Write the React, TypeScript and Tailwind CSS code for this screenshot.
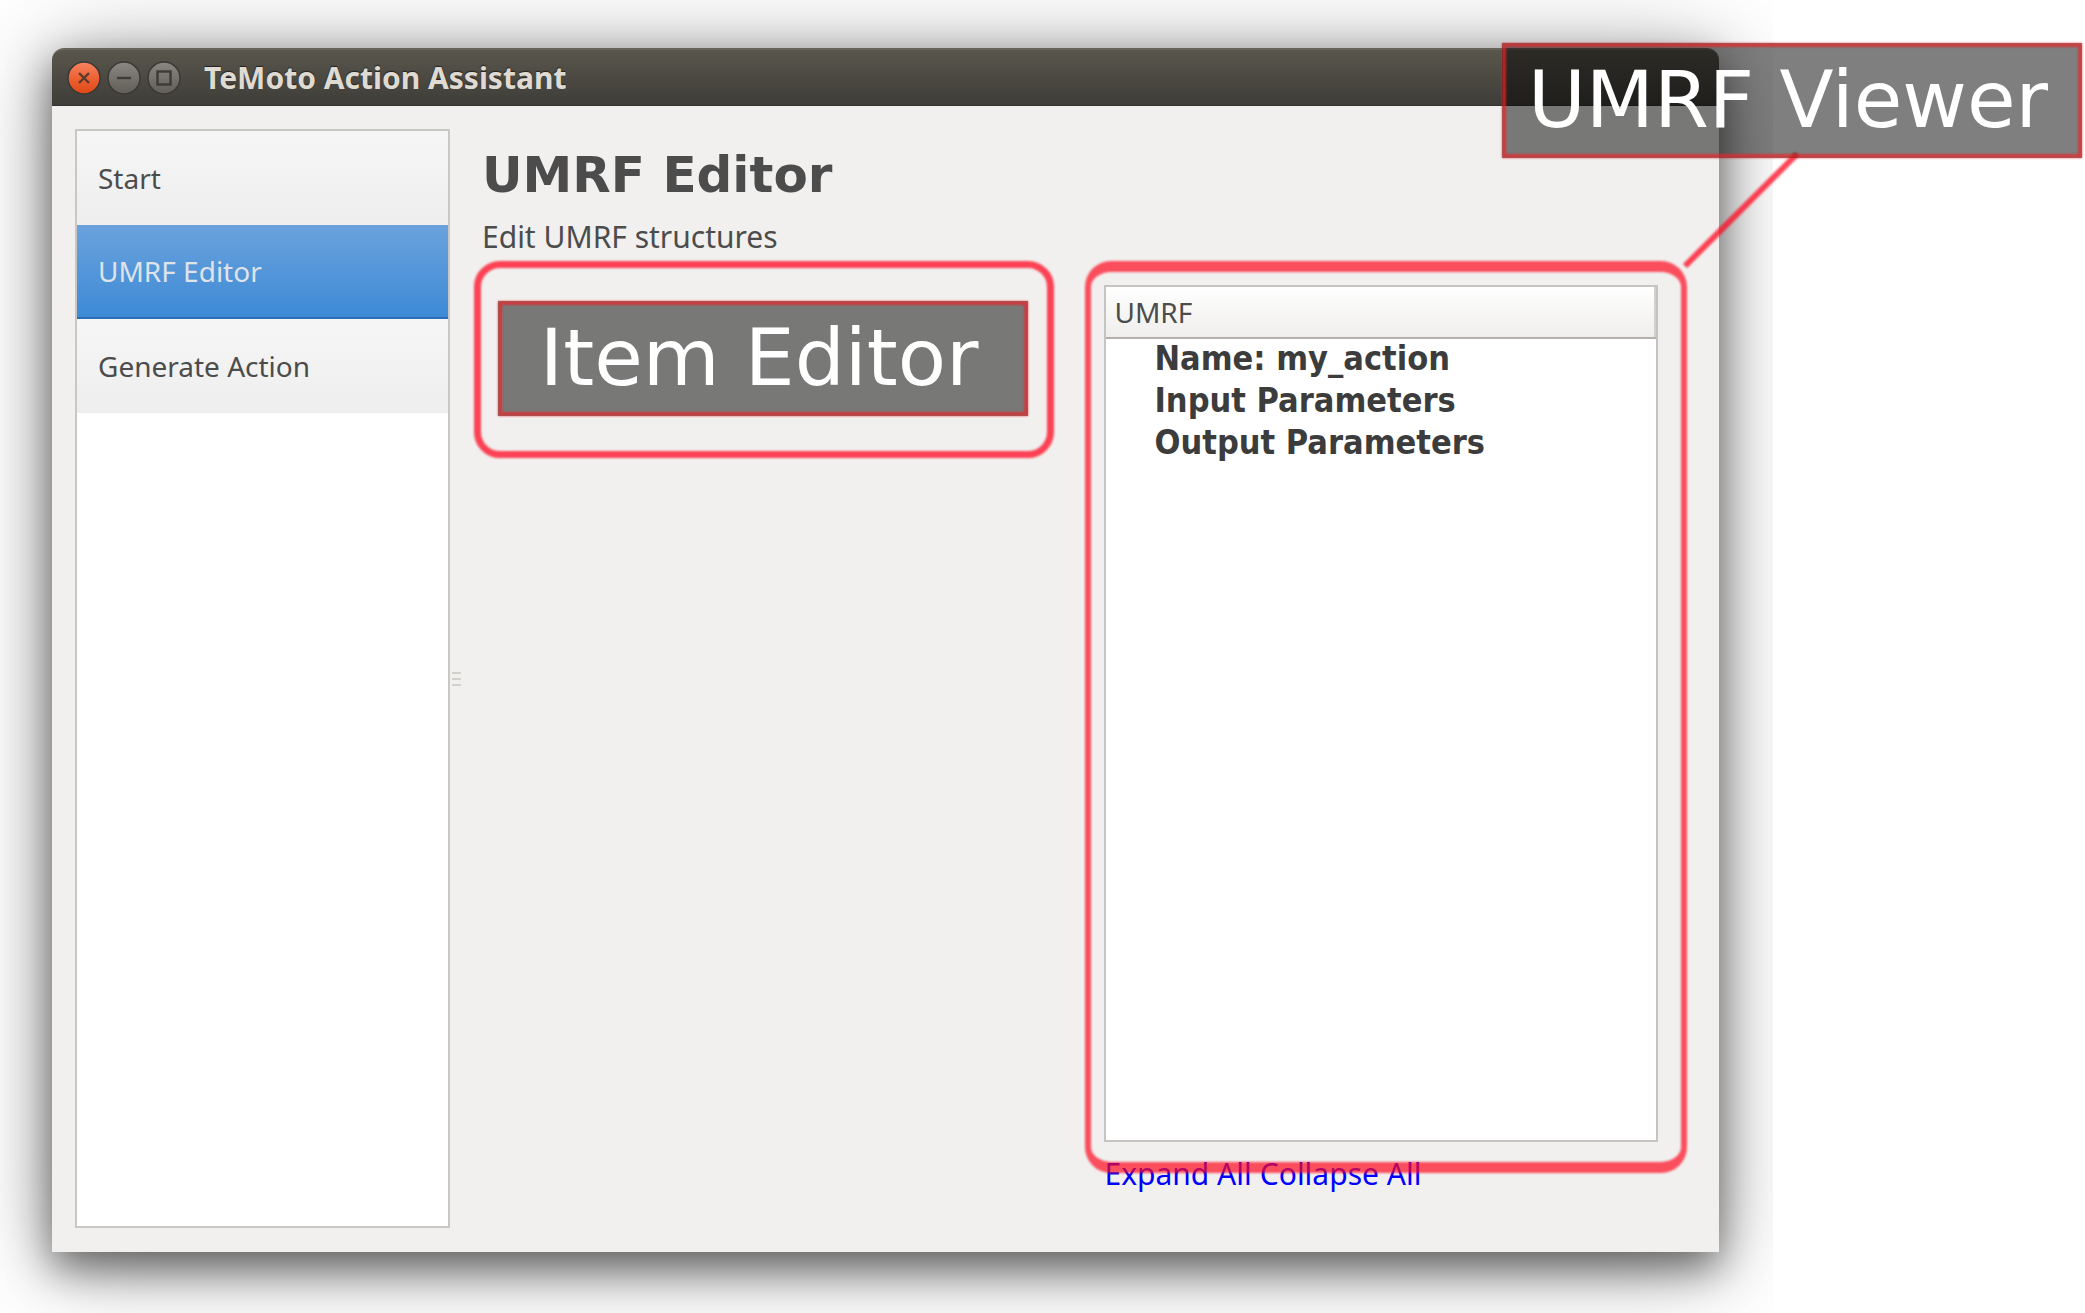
import React from "react";

const pages = ["Start", "UMRF Editor", "Generate Action"];
const treeItems = ["Name: my_action", "Input Parameters", "Output Parameters"];

function WindowButton({ kind }: { kind: "close" | "minimize" | "maximize" }) {
  const close = kind === "close";
  return (
    <button type="button" aria-label={kind} className="size-9">
      <svg viewBox="0 0 36 36" className="size-9">
        <defs>
          <linearGradient id={`fill-${kind}`} x1="0" y1="0" x2="0" y2="1">
            <stop offset="0" stopColor={close ? "#f68462" : "#8a8882"} />
            <stop offset="0.5" stopColor={close ? "#ee6234" : "#74726b"} />
            <stop offset="1" stopColor={close ? "#dd4814" : "#605e57"} />
          </linearGradient>
        </defs>
        <circle cx="18" cy="18" r="16" fill={`url(#fill-${kind})`} stroke="#3a3833" strokeWidth="1.5" />
        {kind === "close" && <path d="M13 13l10 10M23 13l-10 10" stroke="#5a3a2c" strokeWidth="2.4" />}
        {kind === "minimize" && <path d="M11 18h14" stroke="#3c3b37" strokeWidth="2.4" />}
        {kind === "maximize" && (
          <rect x="11.5" y="11.5" width="13" height="13" fill="none" stroke="#3c3b37" strokeWidth="2.4" />
        )}
      </svg>
    </button>
  );
}

function TitleBar() {
  return (
    <header className="flex h-[58px] shrink-0 items-center rounded-t-xl border-t-2 border-b border-t-[#67645a] border-b-[#33322d] bg-linear-to-b from-[#59564c] to-[#3e3d38] pl-[14px]">
      <div className="flex gap-1">
        <WindowButton kind="close" />
        <WindowButton kind="minimize" />
        <WindowButton kind="maximize" />
      </div>
      <h1 className="ml-[22px] text-[30px] leading-10 font-bold text-[#dfdbd2] [text-shadow:0_-1px_1px_#22211e]">
        TeMoto Action Assistant
      </h1>
    </header>
  );
}

function Sidebar() {
  return (
    <nav aria-label="Pages" className="w-[375px] shrink-0 border-2 border-[#c9c7c3] bg-white">
      <ul>
        {pages.map((page) => (
          <li key={page}>
            <button
              type="button"
              aria-current={page === "UMRF Editor" ? "page" : undefined}
              className="h-[94px] w-full bg-linear-to-b from-[#f6f6f6] to-[#eeeeee] px-[21px] text-left text-[28px] leading-10 text-[#4c4c4c] aria-[current=page]:border-b-2 aria-[current=page]:border-[#2a6db5] aria-[current=page]:from-[#6aa2dc] aria-[current=page]:to-[#3d8ad6] aria-[current=page]:text-[#dfe3ea]"
            >
              {page}
            </button>
          </li>
        ))}
      </ul>
    </nav>
  );
}

function Splitter() {
  return (
    <div className="flex w-6 shrink-0 flex-col justify-center gap-1 pl-[2px]">
      <span className="h-[2px] w-[9px] bg-[#d2d0cd]" />
      <span className="h-[2px] w-[9px] bg-[#d2d0cd]" />
      <span className="h-[2px] w-[9px] bg-[#d2d0cd]" />
    </div>
  );
}

function Callout({ children }: { children: string }) {
  return (
    <div className="relative flex h-[115px] items-center justify-center bg-black/50 pr-2 pb-[2px] font-['DejaVu_Sans',sans-serif] text-[79px] leading-[92px] text-white">
      <span aria-hidden="true" className="absolute inset-0 border-4 border-[#e8262a]/75 blur-[1px]" />
      <span className="relative whitespace-nowrap">{children}</span>
    </div>
  );
}

function ItemEditor() {
  return (
    <section aria-label="Item Editor" className="relative self-start pt-10 pr-[26px] pb-[42px] pl-6">
      <span
        aria-hidden="true"
        className="pointer-events-none absolute inset-0 rounded-[26px] border-[7px] border-[#ff0820]/75 blur-[1px]"
      />
      <Callout>Item Editor</Callout>
    </section>
  );
}

function UmrfViewer() {
  return (
    <section aria-label="UMRF Viewer" className="relative flex flex-col pt-6 pr-[29px] pb-[58px] pl-[19px]">
      <div className="flex-1 border-2 border-[#c6c4c1] bg-white">
        <table className="w-full border-collapse text-left">
          <thead>
            <tr>
              <th className="h-[51px] border-r-2 border-b-2 border-r-[#d2d0cd] border-b-[#b5b0aa] bg-linear-to-b from-white to-[#efeeec] px-2 text-[28px] leading-10 font-normal text-[#4c4c4c]">
                UMRF
              </th>
            </tr>
          </thead>
          <tbody className="font-['DejaVu_Sans_Condensed','DejaVu_Sans',sans-serif] text-[34px] font-bold text-[#3c3c3c]">
            {treeItems.map((item) => (
              <tr key={item}>
                <td className="h-[42px] pb-1 pl-12 leading-[38px]">{item}</td>
              </tr>
            ))}
          </tbody>
        </table>
      </div>
      <div className="mt-3 flex gap-2 text-[30px] leading-10 text-[#0000ff]">
        <a href="#expand">Expand All</a>
        <a href="#collapse">Collapse All</a>
      </div>
      <span
        aria-hidden="true"
        className="pointer-events-none absolute inset-x-0 top-0 bottom-[79px] rounded-[26px] border-x-[6px] border-y-[11px] border-[#ff0820]/70 blur-[1px]"
      />
    </section>
  );
}

export default function App() {
  return (
    <div className="relative flex min-h-screen bg-white font-['Noto_Sans',sans-serif]">
      <div className="mr-[312px] flex flex-1 overflow-hidden pt-12 pr-[54px] pb-[61px] pl-[52px]">
        <div className="flex flex-1 flex-col rounded-t-xl bg-[#f1f0ee] shadow-[0_16px_40px_rgba(0,0,0,0.5),0_8px_90px_rgba(0,0,0,0.38)]">
          <TitleBar />
          <div className="flex flex-1 pt-[23px] pr-8 pl-[23px]">
            <div className="flex pb-6">
              <Sidebar />
              <Splitter />
            </div>
            <main className="flex flex-1 flex-col pt-4">
              <h2 className="pl-2 font-['DejaVu_Sans',sans-serif] text-[50px] leading-[60px] font-bold text-[#4c4c4c]">
                UMRF Editor
              </h2>
              <p className="pt-3 pb-1 pl-2 text-[30px] leading-10 text-[#4c4c4c]">Edit UMRF structures</p>
              <div className="grid flex-1 grid-cols-[580fr_601fr] gap-[31px]">
                <ItemEditor />
                <UmrfViewer />
              </div>
            </main>
          </div>
        </div>
      </div>

      <svg aria-hidden="true" viewBox="0 0 124 124" className="absolute top-[148px] right-[282px] size-[124px] blur-[1px]">
        <path d="M118 6L6 118" stroke="#ff0820" strokeOpacity="0.75" strokeWidth="6" />
      </svg>
      <div className="absolute top-[43px] right-[3px] w-[580px]">
        <Callout>UMRF Viewer</Callout>
      </div>
    </div>
  );
}
